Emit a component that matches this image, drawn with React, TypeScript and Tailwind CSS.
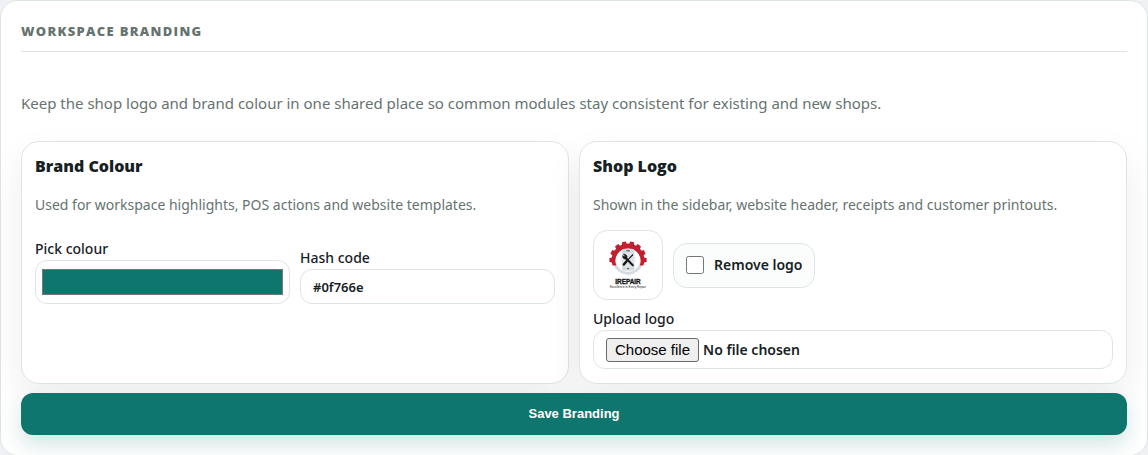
import React, { useState } from 'react';

interface PanelProps {
  title: string;
  description: string;
  children: React.ReactNode;
}

const TEETH = [-90, -64, -38, -13, 13, 38, 64, 90];

const ShopLogo: React.FC = () => (
  <svg viewBox="0 0 48 48" className="size-12" role="img" aria-label="iRepair">
    <path d="M10.5 22 A14 14 0 0 0 37.5 22" fill="none" stroke="#d5dbe0" strokeWidth="3" />
    <g fill="#c3202f">
      {TEETH.map((angle) => (
        <path key={angle} d="M21.2 4.5 L22 0.4 H26 L26.8 4.5 Z" transform={`rotate(${angle} 24 19)`} />
      ))}
      <path d="M8.6 24.6 A16.4 16.4 0 1 1 39.4 24.6 L35.8 24.4 A12.6 12.6 0 1 0 12.2 24.4 Z" />
    </g>
    <rect x="18" y="8" width="12.4" height="21.5" rx="2" fill="#d3d9de" />
    <circle cx="24" cy="19" r="8" fill="#e7eaed" opacity=".6" />
    <path d="M22.4 9.8h3.4" stroke="#444" strokeWidth="1" />
    <circle cx="24.1" cy="27.6" r=".8" fill="#333" />
    <g stroke="#151515" fill="none">
      <path d="M21 16.2 L28.8 24.2" strokeWidth="2" strokeLinecap="round" />
      <path d="M19.6 13.2 L21.3 15 L20.5 16.2 L18.8 14.7 C18.6 17.8 21 18.5 22.6 17.3 C23.6 15.3 22.2 13 19.6 13.2" strokeWidth=".8" fill="#151515" />
      <path d="M29 13.5 L23.6 19.2" strokeWidth="1.1" />
      <path d="M22.6 20.2 L19.8 23.6" strokeWidth="2.4" strokeLinecap="round" />
    </g>
    <text x="24" y="42.9" textAnchor="middle" fontSize="6.4" fontWeight="900" fill="#141414" stroke="#141414" strokeWidth=".3" fontFamily="Liberation Sans, sans-serif">
      IREPAIR
    </text>
    <text x="24" y="46.9" textAnchor="middle" fontSize="3" fontWeight="400" fill="#222" fontFamily="Liberation Sans, sans-serif">
      Excellence in Every Repair
    </text>
  </svg>
);

const Panel: React.FC<PanelProps> = ({ title, description, children }) => (
  <div className="rounded-[18px] border border-[#dde6e4] bg-white px-[13px] pt-[13px] pb-3.5 shadow-[0_16px_38px_rgba(20,30,28,0.07)]">
    <h3 className="font-['Open_Sans',sans-serif] text-base leading-[22px] font-extrabold text-[#17211f]">{title}</h3>
    <p className="mt-[18px] text-sm leading-5 text-[#66736f]">{description}</p>
    {children}
  </div>
);

export default function App() {
  const [colour, setColour] = useState('#0f766e');
  const [removeLogo, setRemoveLogo] = useState(false);
  const [fileName, setFileName] = useState('');

  return (
    <div className="bg-[#eff1f4] font-['Noto_Sans','Open_Sans',sans-serif] text-[#17211f]">
      <section className="rounded-[18px] border border-[#dde6e4] bg-white px-5 py-5">
        <h2 className="border-b border-[#dde3e2] pb-2.5 font-['Open_Sans',sans-serif] text-[13px] leading-5 font-extrabold tracking-widest text-[#66736f] uppercase">
          Workspace Branding
        </h2>
        <form onSubmit={(e) => e.preventDefault()}>
          <p className="mt-[39px] text-[15px] leading-6 text-[#66736f]">
            Keep the shop logo and brand colour in one shared place so common modules stay consistent for existing and new shops.
          </p>

          <div className="mt-[26px] grid grid-cols-2 gap-2.5">
            <Panel title="Brand Colour" description="Used for workspace highlights, POS actions and website templates.">
              <div className="mt-6 grid grid-cols-2 items-end gap-2.5">
                <div>
                  <label htmlFor="brand-colour" className="block text-sm leading-5 font-medium">
                    Pick colour
                  </label>
                  <input
                    id="brand-colour"
                    type="color"
                    value={colour}
                    onChange={(e) => setColour(e.target.value)}
                    className="mt-px block h-11 w-full rounded-xl border border-[#dde6e4] bg-white p-1"
                  />
                </div>
                <div>
                  <label htmlFor="hash-code" className="block text-sm leading-5 font-medium">
                    Hash code
                  </label>
                  <input
                    id="hash-code"
                    type="text"
                    value={colour}
                    onChange={(e) => setColour(e.target.value)}
                    className="mt-px block h-[35px] w-full rounded-xl border border-[#dde6e4] bg-white px-3 text-[13px] font-semibold"
                  />
                </div>
              </div>
            </Panel>

            <Panel title="Shop Logo" description="Shown in the sidebar, website header, receipts and customer printouts.">
              <div className="mt-[15px] flex items-center gap-2.5">
                <div className="grid size-[70px] place-items-center rounded-[14px] border border-[#dde6e4] bg-white">
                  <ShopLogo />
                </div>
                <label className="flex h-[45px] items-center gap-2.5 rounded-[14px] border border-[#dde6e4] bg-[#fbfdfd] px-3 text-sm font-semibold">
                  <input
                    type="checkbox"
                    checked={removeLogo}
                    onChange={(e) => setRemoveLogo(e.target.checked)}
                    className="size-[18px]"
                  />
                  Remove logo
                </label>
              </div>
              <label htmlFor="logo-file" className="mt-[9px] block text-sm leading-5 font-medium">
                Upload logo
              </label>
              <label
                htmlFor="logo-file"
                className="mt-px flex h-[39px] items-center gap-1 rounded-xl border border-[#dde6e4] bg-white px-3 text-sm font-semibold"
              >
                <input
                  id="logo-file"
                  type="file"
                  accept="image/*"
                  onChange={(e) => setFileName(e.target.files?.[0]?.name ?? '')}
                  className="sr-only"
                />
                <span className="rounded-[3px] border border-[#6b6b6b] bg-[#efefef] px-2 font-['Liberation_Sans',sans-serif] text-[15px] leading-[22px] font-normal text-black">
                  Choose file
                </span>
                {fileName || 'No file chosen'}
              </label>
            </Panel>
          </div>

          <button
            type="submit"
            className="mt-[9px] h-[42px] w-full rounded-xl bg-[#0f766e] font-['Liberation_Sans',sans-serif] text-[13px] font-bold text-white shadow-[0_10px_22px_rgba(15,118,110,0.18)]"
          >
            Save Branding
          </button>
        </form>
      </section>
    </div>
  );
}
